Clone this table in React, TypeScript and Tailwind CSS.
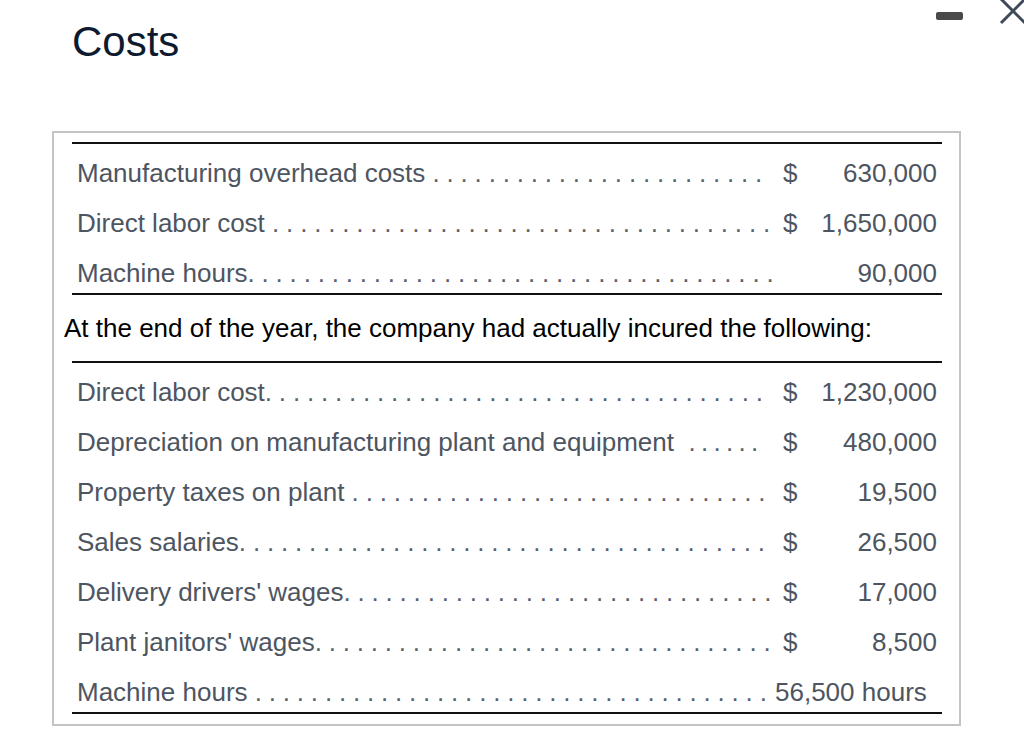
import React from "react";

type Row = { label: string; dots: number; dollar?: boolean; value: string; wide?: boolean; tight?: boolean };

const top: Row[] = [
  { label: "Manufacturing overhead costs ", dots: 24, dollar: true, value: "630,000" },
  { label: "Direct labor cost ", dots: 36, dollar: true, value: "1,650,000" },
  { label: "Machine hours", dots: 38, value: "90,000" },
];

const bottom: Row[] = [
  { label: "Direct labor cost", dots: 36, dollar: true, value: "1,230,000" },
  { label: "Depreciation on manufacturing plant and equipment  ", dots: 6, dollar: true, value: "480,000", tight: true },
  { label: "Property taxes on plant ", dots: 30, dollar: true, value: "19,500" },
  { label: "Sales salaries", dots: 38, dollar: true, value: "26,500" },
  { label: "Delivery drivers' wages", dots: 31, dollar: true, value: "17,000" },
  { label: "Plant janitors' wages", dots: 33, dollar: true, value: "8,500" },
  { label: "Machine hours ", dots: 37, value: "56,500 hours", wide: true },
];

function TableRow({ r }: { r: Row }) {
  return (
    <div className="flex h-[40px] items-center pl-[5px] pr-[5px] text-[#4d5561]">
      <div className="flex min-w-0 flex-1 whitespace-pre">
        <span>{r.label}</span>
        <span className={(r.tight ? "tracking-[5.3px]" : "tracking-[6.8px]") + " text-[#5a626d]"}>
          {".".repeat(r.dots - 1)}
        </span>
        <span className="text-[#5a626d]">.</span>
      </div>
      {r.wide ? (
        <div className="w-[162px] text-left">{r.value}</div>
      ) : (
        <>
          <div className="w-[25px] pl-[8px]">{r.dollar ? "$" : ""}</div>
          <div className="w-[137px] text-right">{r.value}</div>
        </>
      )}
    </div>
  );
}

function Table({ rows }: { rows: Row[] }) {
  return (
    <div className="ml-[18px] mr-[17px] flex flex-col gap-[10px] border-y-2 border-[#111] pt-[9px]">
      {rows.map((r, i) => (
        <TableRow key={i} r={r} />
      ))}
    </div>
  );
}

export default function App() {
  return (
    <div
      className="relative h-[752px] w-[1024px] overflow-hidden bg-white"
      style={{ fontFamily: '"Liberation Sans", Arial, sans-serif' }}
    >
      <div className="flex h-[131px] items-start pl-[72px] pt-[17px]">
        <h1 className="text-[42px] leading-[50px] text-[#0e1a2f]">Costs</h1>
      </div>
      <div className="absolute left-[936px] top-[12px] h-[8px] w-[27px] rounded-[2px] bg-[#4a4a4a]" />
      <svg className="absolute left-[998px] top-[-4px]" width="32" height="30" viewBox="0 0 32 30">
        <path d="M3 3 L27 27 M27 3 L3 27" stroke="#3e4a59" strokeWidth="3" fill="none" />
      </svg>
      <div className="ml-[52px] w-[909px] border-2 border-[#c4c4c4] pt-[9px] pb-[10px] text-[26px] leading-[30px]">
        <Table rows={top} />
        <div className="flex h-[66px] items-center pl-[10px] text-black">
          At the end of the year, the company had actually incured the following:
        </div>
        <Table rows={bottom} />
      </div>
    </div>
  );
}
